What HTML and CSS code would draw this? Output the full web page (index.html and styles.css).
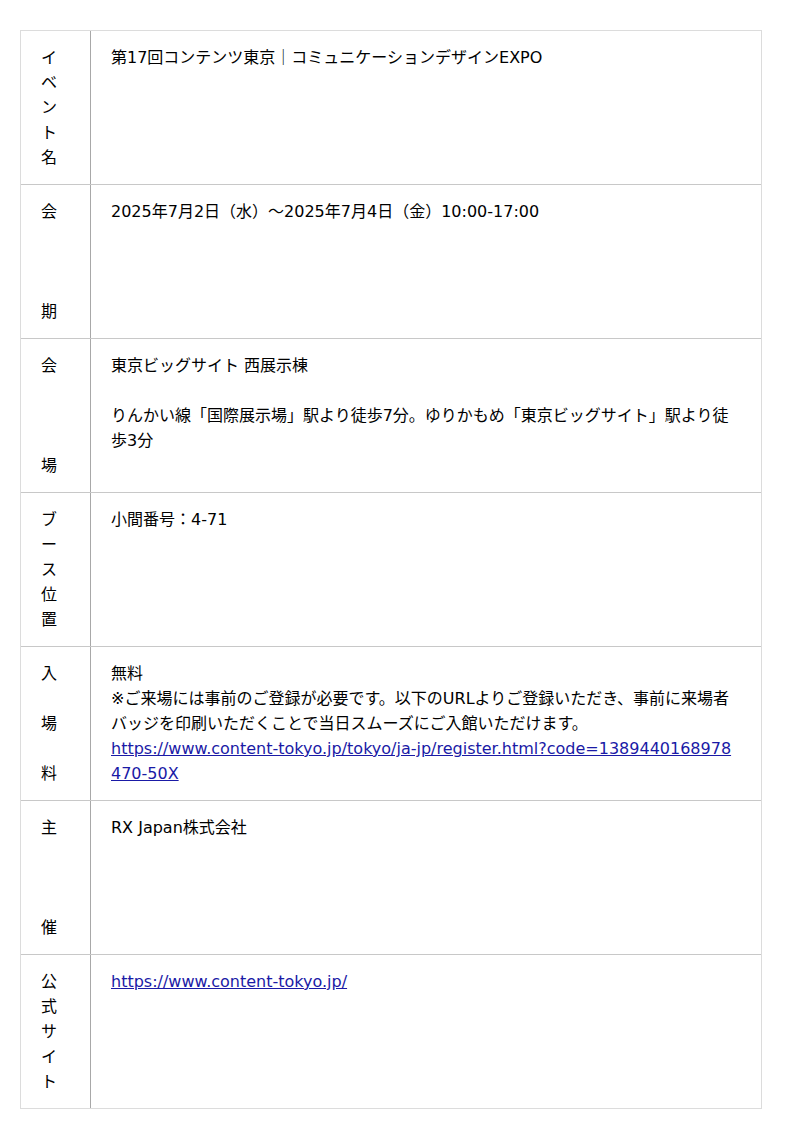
FILE: index.html
```html
<!DOCTYPE html>
<html lang="ja">
<head>
<meta charset="utf-8">
<title>イベント情報</title>
<link rel="stylesheet" href="styles.css">
</head>
<body>
<div class="info">
  <div class="row">
    <div class="label"><span>イ</span><span>ベ</span><span>ン</span><span>ト</span><span>名</span></div>
    <div class="value">第17回コンテンツ東京｜コミュニケーションデザインEXPO</div>
  </div>
  <div class="row">
    <div class="label"><span>会</span><span>期</span></div>
    <div class="value">2025年7月2日（水）～2025年7月4日（金）10:00-17:00</div>
  </div>
  <div class="row">
    <div class="label"><span>会</span><span>場</span></div>
    <div class="value">東京ビッグサイト 西展示棟<br><br>りんかい線「国際展示場」駅より徒歩7分。ゆりかもめ「東京ビッグサイト」駅より徒歩3分</div>
  </div>
  <div class="row">
    <div class="label"><span>ブ</span><span>ー</span><span>ス</span><span>位</span><span>置</span></div>
    <div class="value">小間番号：4-71</div>
  </div>
  <div class="row">
    <div class="label"><span>入</span><span>場</span><span>料</span></div>
    <div class="value">無料<br>※ご来場には事前のご登録が必要です。以下のURLよりご登録いただき、事前に来場者バッジを印刷いただくことで当日スムーズにご入館いただけます。<br><a class="url" href="#">https://www.content-tokyo.jp/tokyo/ja-jp/register.html?code=1389440168978470-50X</a></div>
  </div>
  <div class="row">
    <div class="label"><span>主</span><span>催</span></div>
    <div class="value">RX Japan株式会社</div>
  </div>
  <div class="row">
    <div class="label"><span>公</span><span>式</span><span>サ</span><span>イ</span><span>ト</span></div>
    <div class="value"><a class="url" href="#">https://www.content-tokyo.jp/</a></div>
  </div>
</div>
</body>
</html>
```

FILE: styles.css
```css
html, body {
  margin: 0;
  padding: 0;
  background: #fff;
}
body {
  padding: 30px 38px 30px 20px;
  font-family: "DejaVu Sans", "Noto Sans CJK JP", sans-serif;
  font-size: 16px;
  line-height: 25px;
  color: #000;
}
.info {
  width: 740px;
  border: 1px solid #dcdcdc;
}
.row {
  display: grid;
  grid-template-columns: 70px 1fr;
  border-top: 1px solid #c8c8c8;
}
.row:first-child {
  border-top: none;
}
.label {
  border-right: 1px solid #a8a8a8;
  padding: 14px 20px;
  min-height: 125px;
  display: flex;
  flex-direction: column;
  justify-content: space-between;
}
.value {
  padding: 14px 20px;
  min-height: 125px;
}
.url {
  color: #1a1aa6;
  text-decoration: underline;
  word-break: break-all;
}
```
